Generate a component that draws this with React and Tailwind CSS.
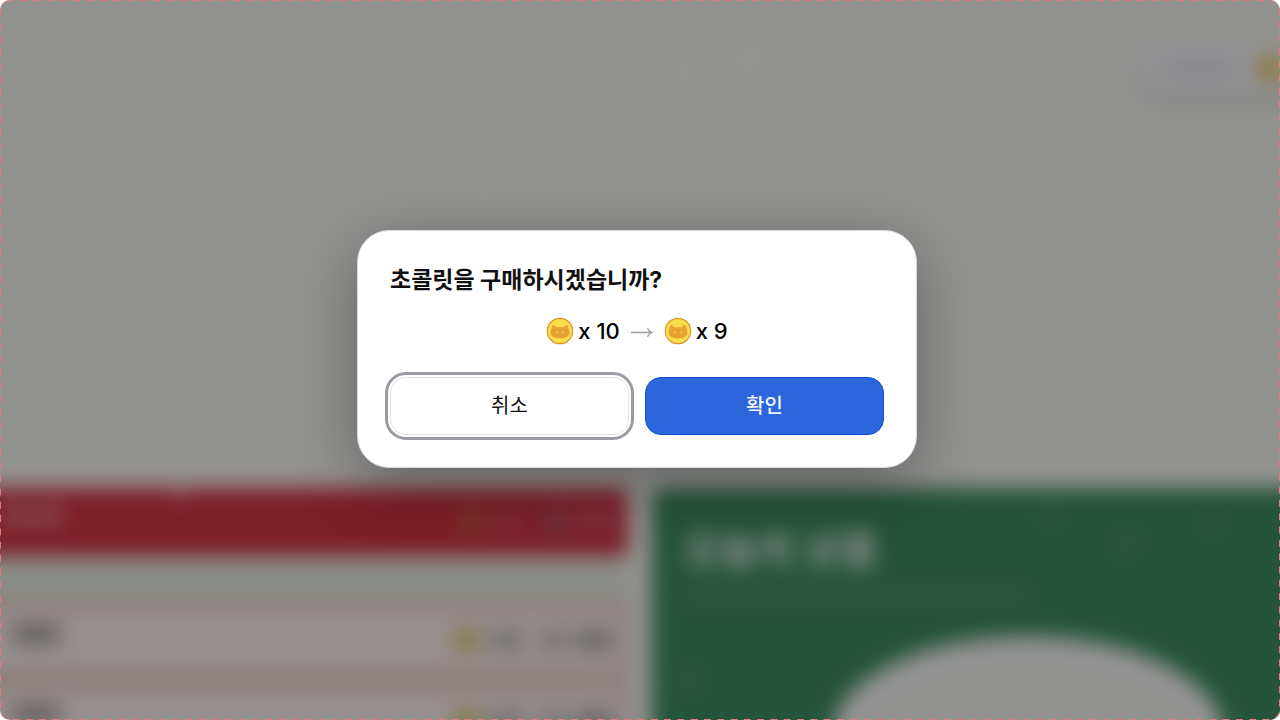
import React, { useState } from "react";

const Coin = ({ className }) => (
  <svg viewBox="0 0 28 28" className={className} aria-hidden="true">
    <circle cx="14" cy="14" r="12.7" fill="#f9df4b" stroke="#dd942f" strokeWidth="1.2" />
    <path
      d="M4.600 16.400C4.200 14.200 5.800 8.800 7.200 8c.8-.3 2.300 1.400 3.200 2.200h7.200c.9-.8 2.400-2.500 3.200-2.200 1.400.8 3 6.200 2.600 8.400-.6 3.200-4.800 4.900-9.400 4.900s-8.800-1.700-9.400-4.900z"
      fill="#e8a035"
    />
    <path d="M10 15l1.800.8M18 15l-1.800.8" stroke="#f9df4b" strokeWidth="1" strokeLinecap="round" />
  </svg>
);

const Arrow = () => (
  <svg viewBox="0 0 24 12" className="h-3 w-6" fill="none" stroke="#9b9ba1" strokeWidth="1.3" aria-hidden="true">
    <path d="M1 7.500h21M17.500 3.200c.9 2.200 2.200 3.500 4.500 4.300-2.300.8-3.600 2-4.500 4.200" />
  </svg>
);

const Snow = () => (
  <svg
    className="pointer-events-none absolute inset-8 overflow-visible"
    width="1280"
    height="720"
    fill="#ffffff"
    fillOpacity="0.4"
    aria-hidden="true"
  >
    <circle cx="750" cy="58" r="18" />
    <circle cx="682" cy="72" r="16" />
    <circle cx="482" cy="72" r="8" />
    <circle cx="306" cy="98" r="6" />
    <circle cx="258" cy="140" r="9" />
    <circle cx="325" cy="165" r="10" />
    <circle cx="96" cy="228" r="8" />
    <circle cx="140" cy="234" r="9" />
    <circle cx="484" cy="186" r="7" />
    <circle cx="1028" cy="116" r="6" />
    <circle cx="1064" cy="150" r="9" />
    <circle cx="1075" cy="42" r="8" />
    <circle cx="1064" cy="370" r="9" />
    <circle cx="180" cy="496" r="6" />
    <circle cx="1050" cy="514" r="5" fillOpacity="0.2" />
    <circle cx="1127" cy="543" r="6" fillOpacity="0.2" />
    <circle cx="1212" cy="522" r="5" fillOpacity="0.2" />
    <circle cx="688" cy="682" r="8" fillOpacity="0.12" />
  </svg>
);

const ProductRow = () => (
  <div className="-ml-8 flex h-20 items-center justify-between border-y-12 border-r-8 border-[#efd0d0] bg-[#fbefee] pr-2 pl-8">
    <div className="mb-3 ml-3 h-5 w-12 bg-[#a8a2a0]" />
    <div className="flex items-center gap-2">
      <div className="h-6 w-7 rounded-full bg-[#dcc678]" />
      <div className="h-5 w-9 bg-[#c4bdbc]" />
      <div className="ml-2 h-5 w-7 bg-[#c4bdbc]" />
      <div className="h-5 w-9 bg-[#aea7a6]" />
    </div>
  </div>
);

const ShopPage = () => (
  <div className="flex h-full flex-col">
    <div className="flex h-[488px] shrink-0 justify-end pt-11">
      <div className="-mr-8 flex h-12 w-[168px] items-center gap-4 rounded-xl bg-[#f4f5f8] pl-4 shadow-[0_8px_24px_rgba(0,0,0,0.14)]">
        <div className="h-3 w-20 bg-[#dcdde4]" />
        <Coin className="h-7 w-7 opacity-80" />
      </div>
    </div>
    <div className="grid flex-1 grid-cols-2 gap-6">
      <div>
        <div className="-ml-8 flex h-[68px] items-center justify-between rounded-r-lg bg-[#d03443] pr-3 pl-8">
          <div className="mb-3 h-6 w-16 bg-[#dc6870]" />
          <div className="flex items-center gap-2">
            <div className="h-6 w-6 rounded-full bg-[#c4623f]" />
            <div className="h-4 w-8 bg-[#d04e5a]" />
            <div className="ml-3 h-6 w-6 rounded-full bg-[#b46068]" />
            <div className="h-4 w-10 bg-[#d45c66]" />
          </div>
        </div>
        <div className="-ml-8 h-11 bg-[#e7ebe2]" />
        <ProductRow />
        <ProductRow />
      </div>
      <div className="-mr-8 rounded-tl-xl bg-[#3f8b63] pt-9 pl-8">
        <p className="text-[40px] leading-[52px] font-bold text-[#eef2ef]">오늘의 상품</p>
        <div className="mt-3 h-4 w-[340px] bg-[#528f6c]" />
        <div className="mt-8 ml-[148px] h-[200px] w-[392px] rounded-[50%] bg-[#f5f5f3]" />
      </div>
    </div>
  </div>
);

const PurchaseDialog = ({ count, onClose }) => (
  <div
    role="dialog"
    aria-modal="true"
    aria-labelledby="purchase-title"
    className="w-full max-w-[560px] rounded-[32px] border border-[#d8d8d8] bg-white p-8 text-[#111113] shadow-[0_16px_64px_rgba(0,0,0,0.32)]"
  >
    <h2 id="purchase-title" className="text-[23px] leading-[34px] font-bold">
      초콜릿을 구매하시겠습니까?
    </h2>
    <div className="mt-5 flex h-7 items-center justify-center text-[22px] font-medium text-black">
      <Coin className="mr-1 h-7 w-7" />
      <span>x {count}</span>
      <span className="mx-[10px]">
        <Arrow />
      </span>
      <Coin className="mr-1 h-7 w-7" />
      <span>x {count - 1}</span>
    </div>
    <div className="mt-8 grid grid-cols-2 gap-4 text-xl">
      <button
        type="button"
        onClick={onClose}
        className="h-[58px] rounded-2xl border border-[#e4e4e7] bg-white outline-3 outline-offset-2 outline-[#9b9aa3]"
      >
        취소
      </button>
      <button
        type="button"
        onClick={onClose}
        className="h-[58px] rounded-2xl border border-[#0c4fc9] bg-[#2d65dc] font-medium text-[#f1f5ff]"
      >
        확인
      </button>
    </div>
  </div>
);

const App = () => {
  const [isOpen, setIsOpen] = useState(true);

  return (
    <div className="relative h-screen overflow-hidden rounded-[10px] font-['Inter','Noto_Sans_CJK_KR',sans-serif]">
      {/* bleeds past the frame so the blur stays solid at the edges */}
      <div className={isOpen ? "absolute -inset-8 bg-[#f4f4f1] p-8 blur-[10px]" : "absolute -inset-8 bg-[#f4f4f1] p-8"}>
        <ShopPage />
        <Snow />
      </div>
      {isOpen && (
        <div className="absolute inset-0 flex items-center justify-center bg-black/40 pr-[6px] pb-[22px]">
          <PurchaseDialog count={10} onClose={() => setIsOpen(false)} />
        </div>
      )}
      <svg className="pointer-events-none absolute inset-0 h-full w-full" aria-hidden="true">
        <rect
          width="100%"
          height="100%"
          rx="10"
          fill="none"
          stroke="#e07c7c"
          strokeWidth="2"
          strokeDasharray="7 6.3"
          strokeDashoffset="3.300"
        />
      </svg>
    </div>
  );
};

export default App;
